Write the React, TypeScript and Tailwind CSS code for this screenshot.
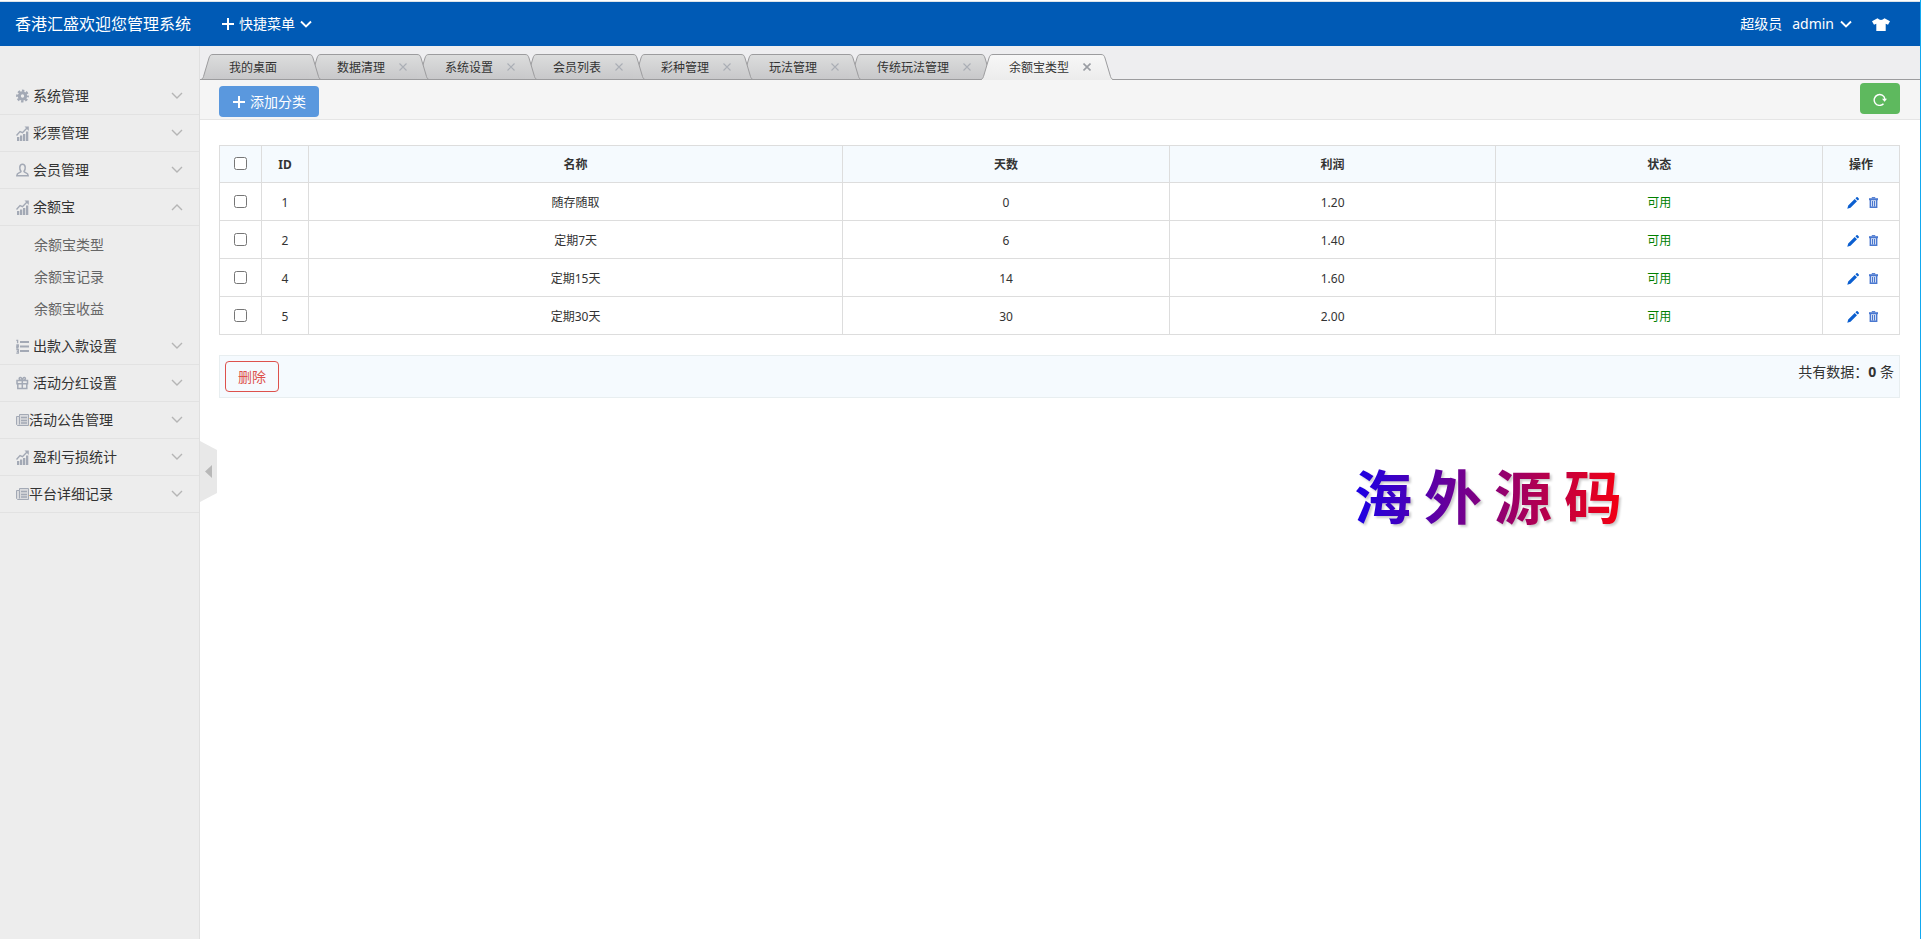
import { ReactNode } from 'react';

type MenuItem = {
  label: string;
  icon: ReactNode;
  tight?: boolean;
  children?: string[];
};

function GearIcon() {
  return (
    <svg width="13" height="14" viewBox="0 0 13 14" fill="none" stroke="currentColor">
      <circle cx="6.5" cy="7" r="3.2" strokeWidth="3" />
      <circle cx="6.5" cy="7" r="5.3" strokeWidth="2.2" strokeDasharray="2.4 1.76" strokeDashoffset="1.2" />
    </svg>
  );
}

function ChartIcon() {
  return (
    <svg width="13" height="15" viewBox="0 0 13 15" fill="currentColor">
      <path d="M1 11h2.3v4H1zM4 9.5h2.3V15H4zM7 8h2.3v7H7zM10 5.5h2.3V15H10z" />
      <path d="M.5 9.5L4 5.5l2.5 1.2L11 2" fill="none" stroke="currentColor" strokeWidth="1.4" />
      <path d="M8.5.6h4.300v4.300z" />
    </svg>
  );
}

function UserIcon() {
  return (
    <svg width="13" height="14" viewBox="0 0 13 14" fill="none" stroke="currentColor" strokeWidth="1.5">
      <path d="M5 8.3C3.3 6.6 3 1.2 6.5 1.2S9.700 6.600 8 8.300c.2 1.600 4.200 1.200 4.200 4.400H.8C.8 9.500 4.800 9.900 5 8.300z" />
    </svg>
  );
}

function OrderIcon() {
  return (
    <svg width="13" height="15" viewBox="0 0 13 15" fill="none" stroke="currentColor">
      <path d="M4 3h9M4 7.500h9M4 12h9" strokeWidth="2" />
      <path d="M.3 1.300h1.300v3M.3 6h2v1.500H.8V9H2.500M.3 10.700h2v3.500h-2M.8 12.400h1.500" strokeWidth="1.300" />
    </svg>
  );
}

function GiftIcon() {
  return (
    <svg width="13" height="14" viewBox="0 0 13 14" fill="none" stroke="currentColor" strokeWidth="1.500">
      <path d="M1 4.500h10.500v3.200H1zM1.800 7.700v4.800h9V7.700M6.300 4.500v8M6.300 4.300C3.500 4.300 2.800 3 3.400 2c.9-1.300 2.400-.3 2.900 2.300C6.800 1.700 8.300.7 9.200 2c.6 1-.1 2.300-2.900 2.300z" />
    </svg>
  );
}

function NewsIcon() {
  return (
    <svg width="13" height="14" viewBox="0 0 13 14" fill="none" stroke="currentColor">
      <path d="M3.500 1.500h9v11h-11l-1-1v-8h3z" fill="currentColor" fillOpacity=".25" />
      <path d="M3.500 3.500v8" />
      <path d="M5 4.500h6M5 7.500h6M5 10h6" strokeWidth="1.500" />
    </svg>
  );
}

function Chevron({ up = false }: { up?: boolean }) {
  return (
    <svg width="12" height="8" viewBox="0 0 12 8" fill="none" stroke="currentColor" strokeWidth="1.400">
      <path d={up ? 'M1 7l5-5 5 5' : 'M1 1l5 5 5-5'} />
    </svg>
  );
}

function HeaderChevron() {
  return (
    <svg width="12" height="8" viewBox="0 0 12 8" fill="none" stroke="currentColor" strokeWidth="1.900">
      <path d="M1 1.500l5 5 5-5" />
    </svg>
  );
}

function PlusIcon() {
  return (
    <svg width="12" height="12" viewBox="0 0 12 12" stroke="currentColor" strokeWidth="2">
      <path d="M6 0v12M0 6h12" />
    </svg>
  );
}

const menu: MenuItem[] = [
  { label: '系统管理', icon: <GearIcon /> },
  { label: '彩票管理', icon: <ChartIcon /> },
  { label: '会员管理', icon: <UserIcon /> },
  { label: '余额宝', icon: <ChartIcon />, children: ['余额宝类型', '余额宝记录', '余额宝收益'] },
  { label: '出款入款设置', icon: <OrderIcon /> },
  { label: '活动分红设置', icon: <GiftIcon /> },
  { label: '活动公告管理', icon: <NewsIcon />, tight: true },
  { label: '盈利亏损统计', icon: <ChartIcon /> },
  { label: '平台详细记录', icon: <NewsIcon />, tight: true },
];

const tabs = ['我的桌面', '数据清理', '系统设置', '会员列表', '彩种管理', '玩法管理', '传统玩法管理', '余额宝类型'];

// earlier tabs overlap later ones, the active tab is above all
const tabLayers = ['z-[8]', 'z-[7]', 'z-[6]', 'z-[5]', 'z-[4]', 'z-[3]', 'z-[2]', 'z-[9]'];

const rows = [
  { id: 1, name: '随存随取', days: 0, profit: '1.20' },
  { id: 2, name: '定期7天', days: 6, profit: '1.40' },
  { id: 4, name: '定期15天', days: 14, profit: '1.60' },
  { id: 5, name: '定期30天', days: 30, profit: '2.00' },
];

function TabEdge({ active, flip = false }: { active: boolean; flip?: boolean }) {
  const id = `edge-${active ? 'on' : 'off'}-${flip ? 'r' : 'l'}`;
  return (
    <svg width="12" height="26" viewBox="0 0 12 26" className={flip ? '-scale-x-100' : ''}>
      <defs>
        <linearGradient id={id} x1="0" y1="0" x2="0" y2="1">
          <stop offset="0" stopColor={active ? '#f7f7f7' : '#dcdddd'} />
          <stop offset="1" stopColor={active ? '#ececec' : '#c8c8ca'} />
        </linearGradient>
      </defs>
      <path d="M0 26C1.500 25 2 24 2.500 22.500L8 4C8.800 1.600 9.500 0 12 0V26z" fill={`url(#${id})`} />
      <path d="M0 25.500C1.500 25 2 24 2.500 22.500L8 4C8.800 1.600 9.500.5 12 .5" fill="none" stroke="#9c9c9e" />
      {!active && <path d="M0 25.500h12" stroke="#9c9c9e" />}
    </svg>
  );
}

function Tab({ label, layer, active, closable }: { label: string; layer: string; active: boolean; closable: boolean }) {
  return (
    <li className={`relative -mr-3 flex h-[26px] ${layer}`}>
      <TabEdge active={active} />
      <div
        className={`relative flex items-center border-t border-[#9c9c9e] bg-gradient-to-b pl-4 pr-8 ${
          active ? 'from-[#f7f7f7] to-[#ececec]' : 'border-b from-[#dcdddd] to-[#c8c8ca]'
        }`}
      >
        <a href="#" className="pt-px leading-6">{label}</a>
        {closable && (
          <button
            type="button"
            aria-label={`关闭 ${label}`}
            className={`absolute right-[10px] top-2 ${active ? 'text-[#9a9da3]' : 'text-[#aaaeb5]'}`}
          >
            <svg width="8" height="8" viewBox="0 0 8 8" stroke="currentColor" strokeWidth={active ? 1.6 : 1.1}>
              <path d="M.5.5l7 7M7.500.5l-7 7" />
            </svg>
          </button>
        )}
      </div>
      <TabEdge active={active} flip />
    </li>
  );
}

function Header() {
  return (
    <header className="flex h-[46px] items-center border-t border-white bg-[#005ab5] pt-px text-sm text-white shadow-[inset_0_1px_#dde3e8]">
      <a href="#" className="pl-[15px] text-base">香港汇盛欢迎您管理系统</a>
      <button type="button" className="ml-[31px] flex items-center gap-[5px]">
        <PlusIcon />
        快捷菜单
        <HeaderChevron />
      </button>
      <div className="ml-auto flex items-center pr-[30px]">
        <span>超级员</span>
        <button type="button" className="ml-2.5 flex items-center gap-1.5">
          admin
          <HeaderChevron />
        </button>
        <button type="button" aria-label="换肤" className="ml-5">
          <svg width="18" height="13" viewBox="0 0 18 13" fill="currentColor">
            <path d="M5.500.3Q9 3.600 12.500.3L18 3.300 16 6.700l-2.300-1V13H4.300V5.700L2 6.700 0 3.300z" />
          </svg>
        </button>
      </div>
    </header>
  );
}

function Sidebar() {
  return (
    <aside className="w-[200px] shrink-0 border-r border-[#e0e0e0] bg-[#ededed] pt-8">
      <ul>
        {menu.map((item) => (
          <li key={item.label}>
            <button
              type="button"
              className={`flex h-[37px] w-full items-center border-b border-[#e2e2e2] pl-4 pr-4 text-sm ${
                item.tight ? '' : 'gap-1'
              }`}
            >
              <span className="text-[#a3a9b5]">{item.icon}</span>
              {item.label}
              <span className="ml-auto text-[#b5b5b5]">
                <Chevron up={!!item.children} />
              </span>
            </button>
            {item.children && (
              <ul className="py-[3px]">
                {item.children.map((child) => (
                  <li key={child}>
                    <a href="#" className="block pl-[34px] text-sm leading-8 text-[#666]">{child}</a>
                  </li>
                ))}
              </ul>
            )}
          </li>
        ))}
      </ul>
    </aside>
  );
}

function DataTable() {
  return (
    <table className="w-full table-fixed border-collapse text-center text-xs [&_td]:border [&_td]:border-[#ddd] [&_td]:pt-0.5 [&_th]:border [&_th]:border-[#ddd] [&_th]:pt-0.5">
      <colgroup>
        <col className="w-[42px]" />
        <col className="w-[47px]" />
        <col className="w-[31.8%]" />
        <col />
        <col />
        <col />
        <col className="w-[77px]" />
      </colgroup>
      <thead className="bg-[#f5fafe]">
        <tr className="h-[37px]">
          <th><input type="checkbox" aria-label="全选" className="mx-auto mb-1 block" /></th>
          <th>ID</th>
          <th>名称</th>
          <th>天数</th>
          <th>利润</th>
          <th>状态</th>
          <th>操作</th>
        </tr>
      </thead>
      <tbody>
        {rows.map((row) => (
          <tr key={row.id} className="h-[38px]">
            <td><input type="checkbox" aria-label={row.name} className="mx-auto mb-0.5 block" /></td>
            <td>{row.id}</td>
            <td>{row.name}</td>
            <td>{row.days}</td>
            <td>{row.profit}</td>
            <td className="text-[#008000]">可用</td>
            <td>
              <div className="flex items-center justify-center gap-2.5 pl-0.5">
                <a href="#" aria-label="编辑" className="text-[#0b5fd0]">
                  <svg width="12" height="12" viewBox="0 0 12 12" fill="currentColor">
                    <path d="M.3 11.700l.9-3.200L7.700 2l2.300 2.300-6.500 6.500zM8.400 1.300L9.300.4c.5-.5 1-.5 1.500 0l.8.8c.5.5.5 1 0 1.500l-.9.9z" />
                  </svg>
                </a>
                <a href="#" aria-label="删除" className="text-[#4a78d0]">
                  <svg width="9" height="11" viewBox="0 0 9 11" fill="none" stroke="currentColor">
                    <path d="M0 2.200h9" strokeWidth="2" />
                    <path d="M3 1V.6h3V1" />
                    <path d="M1.300 3v7.300h6.400V3" fill="currentColor" fillOpacity=".25" strokeWidth="1.400" />
                    <path d="M3.500 4v5.500M5.500 4v5.500" strokeWidth="1" />
                  </svg>
                </a>
              </div>
            </td>
          </tr>
        ))}
      </tbody>
    </table>
  );
}

export default function App() {
  return (
    <div className="flex min-h-screen flex-col border-r border-[#12a8f0] bg-white font-['Noto_Sans','Noto_Sans_CJK_SC',sans-serif] text-[#333]">
      <Header />
      <div className="flex flex-1">
        <Sidebar />
        <main className="relative min-w-0 flex-1">
          {/* Tabs */}
          <nav className="flex h-[34px] items-end bg-[#eeeef0] pl-px text-xs shadow-[inset_0_-1px_#9c9c9e]">
            <ul className="flex">
              {tabs.map((label, i) => (
                <Tab
                  key={label}
                  label={label}
                  layer={tabLayers[i]}
                  active={i === tabs.length - 1}
                  closable={i > 0}
                />
              ))}
            </ul>
          </nav>

          {/* Toolbar */}
          <div className="flex h-10 items-start justify-between border-b border-[#e5e5e5] bg-[#f5f5f5] pl-[19px] pr-5">
            <button type="button" className="mt-1.5 flex h-[31px] items-center gap-[5px] rounded bg-[#5a98de] pl-3.5 pr-[13px] text-sm text-white">
              <PlusIcon />
              添加分类
            </button>
            <button type="button" aria-label="刷新" className="mt-[3px] flex h-[31px] w-10 items-center justify-center rounded bg-[#5eb95e] text-white">
              <svg width="14" height="14" viewBox="0 0 14 14" fill="none" stroke="currentColor" strokeWidth="1.400">
                <path d="M10.500 11.700A5.400 5.400 0 1 1 11.900 7" />
                <path d="M9 6.800h5l-2.400 2.900z" fill="currentColor" stroke="none" />
              </svg>
            </button>
          </div>

          {/* Content */}
          <div className="pl-[19px] pr-5 pt-[25px]">
            <DataTable />
            <div className="mt-5 flex h-[43px] items-start justify-between border border-[#e8eef0] bg-[#f5fafe] p-[5px] text-sm">
              <button type="button" className="h-[31px] rounded border border-[#dd514c] px-3 text-[#dd514c]">删除</button>
              <p className="leading-[22px]">
                共有数据：<strong>0</strong> 条
              </p>
            </div>
          </div>

          {/* Sidebar handle */}
          <button type="button" aria-label="收起菜单" className="absolute left-0 top-[395px]">
            <svg width="17" height="61" viewBox="0 0 17 61">
              <path d="M0 0l17 9v43L0 61z" fill="#e8e8e8" />
              <path d="M12 24v13l-7-6.500z" fill="#b8b8b8" />
            </svg>
          </button>

          {/* Watermark */}
          <div className="absolute right-[298px] top-[416px] flex gap-3 bg-linear-to-r/srgb from-[#1a00e6] to-[#f5000f] bg-clip-text font-['Noto_Sans_CJK_SC',sans-serif] text-[58px] font-bold leading-[64px] text-transparent drop-shadow-[2px_2px_1px_#ccc]">
            <span>海</span>
            <span>外</span>
            <span>源</span>
            <span>码</span>
          </div>
        </main>
      </div>
    </div>
  );
}
